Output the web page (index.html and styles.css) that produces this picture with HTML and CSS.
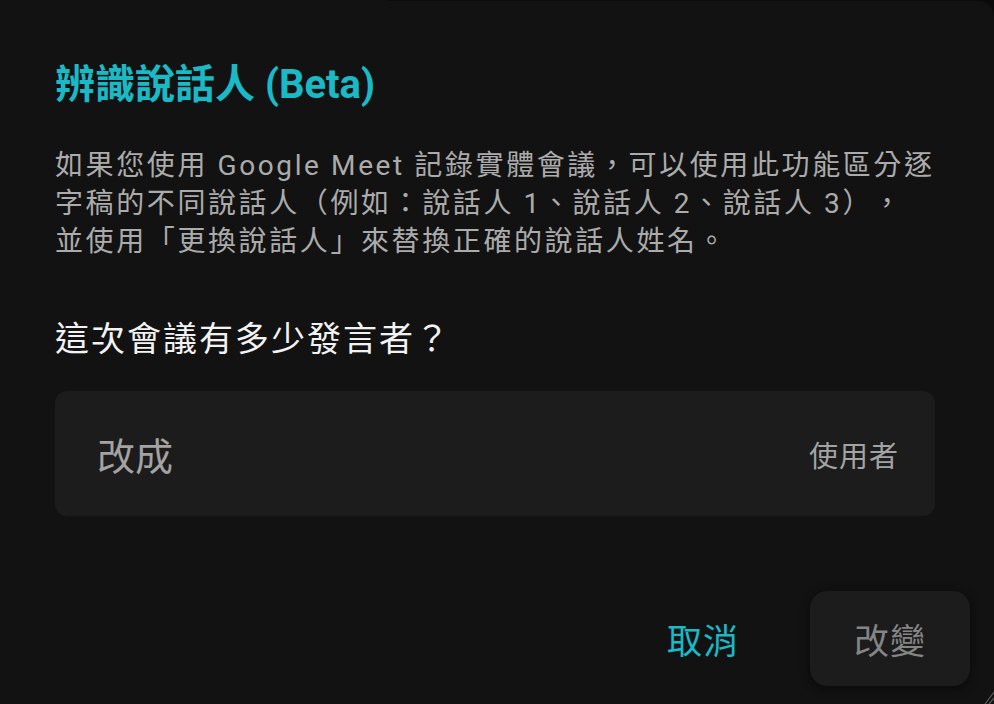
FILE: index.html
```html
<!DOCTYPE html>
<html lang="zh-Hant">
<head>
<meta charset="utf-8">
<title>辨識說話人</title>
<link rel="stylesheet" href="styles.css">
</head>
<body>
<div class="dialog">
  <h1 class="title">辨識說話人 (Beta)</h1>
  <p class="desc">如果您使用 Google Meet 記錄實體會議，可以使用此功能區分逐<br>字稿的不同說話人（例如：說話人 1、說話人 2、說話人 3），<br>並使用「更換說話人」來替換正確的說話人姓名。</p>
  <p class="question">這次會議有多少發言者？</p>
  <div class="field">
    <span class="field-value">改成</span>
    <span class="field-suffix">使用者</span>
  </div>
  <div class="actions">
    <button class="btn btn-text">取消</button>
    <button class="btn btn-filled">改變</button>
  </div>
  <svg class="grip" width="10" height="14" viewBox="0 0 10 14"><path d="M10 2 L1 14 M10 8 L5 14" stroke="#5a5a5a" stroke-width="1.2" fill="none"/></svg>
</div>
</body>
</html>
```
FILE: styles.css
```css
html, body {
  margin: 0;
  padding: 0;
  background: #0b0b0b;
}
body {
  font-family: Roboto, "Noto Sans CJK TC", sans-serif;
  width: 994px;
  height: 704px;
  overflow: hidden;
  text-spacing-trim: space-all;
}
.dialog {
  position: relative;
  margin-top: 1px;
  height: 703px;
  box-sizing: border-box;
  background: #121212;
  border-top-right-radius: 16px;
  padding: 0 59px 0 55px;
  display: flex;
  flex-direction: column;
}
.dialog::before {
  content: "";
  position: absolute;
  top: -1px;
  left: 0;
  width: 388px;
  height: 1px;
  background: #121212;
}
.title {
  margin: 60px 0 0;
  font-size: 40px;
  line-height: 48px;
  font-weight: 700;
  color: #1ab9c6;
}
.desc {
  margin: 38px 0 0;
  font-size: 28px;
  line-height: 38px;
  letter-spacing: 2.6px;
  color: #ababab;
  white-space: nowrap;
}
.question {
  margin: 54px 0 0;
  font-size: 34px;
  line-height: 48px;
  letter-spacing: 2px;
  color: #f2f2f2;
}
.field {
  margin-top: 28px;
  height: 125px;
  background: #1c1c1c;
  border-radius: 12px;
  display: flex;
  align-items: center;
  justify-content: space-between;
  padding: 0 36px 0 42px;
}
.field-value {
  font-size: 38px;
  color: #a3a3a3;
}
.field-suffix {
  font-size: 29px;
  letter-spacing: 1px;
  color: #a3a3a3;
}
.actions {
  margin: 75px -35px 0 0;
  display: flex;
  justify-content: flex-end;
  gap: 27px;
}
.btn {
  width: 160px;
  height: 95px;
  border: none;
  border-radius: 17px;
  font-family: Roboto, "Noto Sans CJK TC", sans-serif;
  font-size: 35px;
  letter-spacing: 1px;
  padding: 0;
  background: transparent;
}
.btn-text {
  color: #1ab9c6;
}
.btn-filled {
  background: #1c1c1c;
  color: #858585;
  box-shadow: 0 2px 10px rgba(0, 0, 0, 0.55);
}
.grip {
  position: absolute;
  right: 0;
  bottom: 0;
}
```
